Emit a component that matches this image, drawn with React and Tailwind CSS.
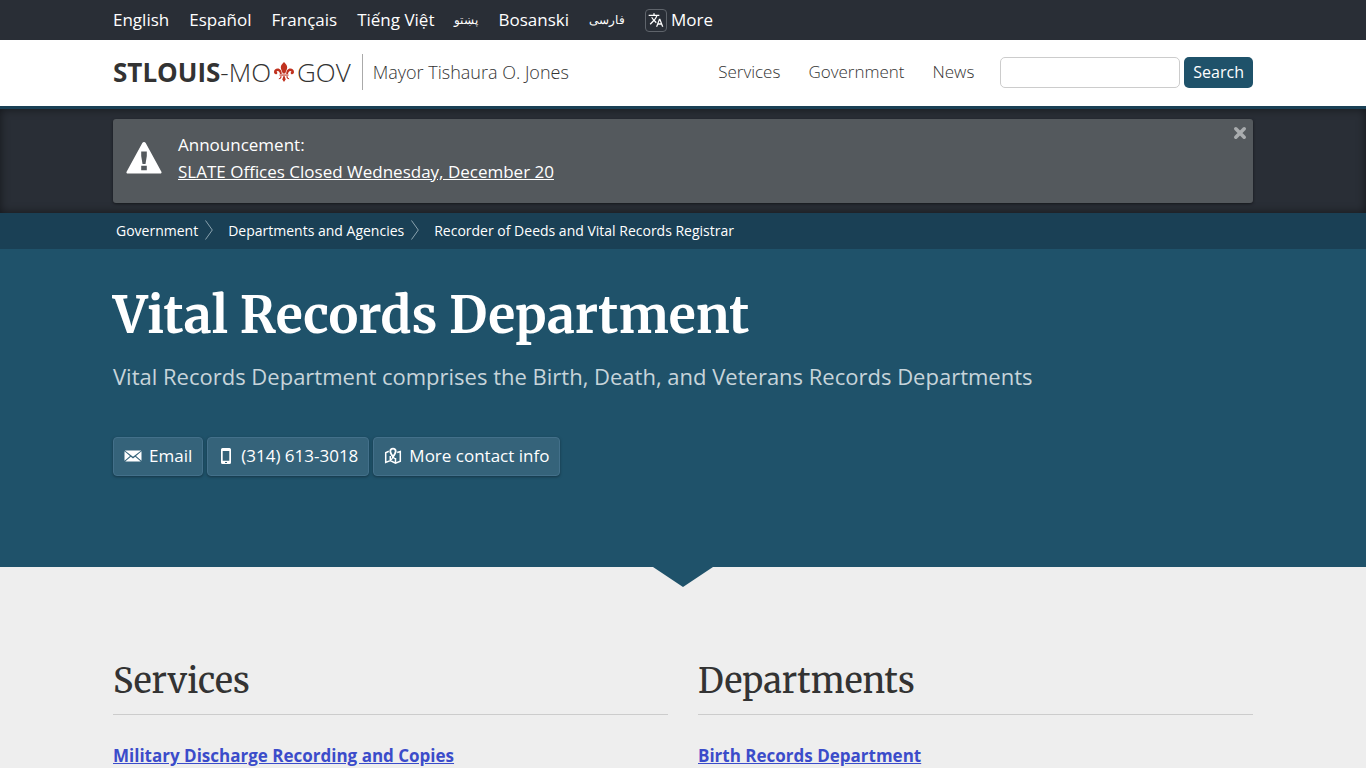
import { MdTranslate } from "react-icons/md";

const languages = [
  { name: "English" },
  { name: "Español" },
  { name: "Français" },
  { name: "Tiếng Việt" },
  { name: "پښتو", rtl: true },
  { name: "Bosanski" },
  { name: "فارسی", rtl: true },
];

const crumbs = [
  "Government",
  "Departments and Agencies",
  "Recorder of Deeds and Vital Records Registrar",
];

const sections = [
  { title: "Services", link: "Military Discharge Recording and Copies" },
  { title: "Departments", link: "Birth Records Department" },
];

function Container({ children, className = "" }) {
  return <div className={`mx-auto w-full max-w-[1140px] ${className}`}>{children}</div>;
}

function FleurDeLis() {
  return (
    <svg viewBox="0 0 20 20" className="mx-[3px] h-5 w-5 fill-[#c0321f]" aria-hidden="true">
      <path d="M10 0c2 2 3.200 3.600 3.200 5.400 0 2.200-1.600 3.900-1.900 6.100H8.700C8.400 9.300 6.800 7.600 6.800 5.400 6.800 3.600 8 2 10 0z" />
      <path d="M7.800 12C7.800 8.900 6.200 6.600 3.700 6.600 1.500 6.600 0 8.200 0 10c0 1.300.8 2.200 1.900 2.200.8 0 1.400-.5 1.400-1.300 0-.6-.3-1-.8-1.100.2-.6.7-.9 1.200-.9 1.300 0 2 1.300 2.300 3.100z" />
      <path d="M12.200 12c0-3.100 1.600-5.400 4.100-5.400C18.500 6.600 20 8.200 20 10c0 1.300-.8 2.200-1.900 2.200-.8 0-1.400-.5-1.400-1.300 0-.6.3-1 .8-1.100-.2-.6-.7-.9-1.200-.9-1.300 0-2 1.300-2.300 3.100z" />
      <path d="M5.500 12.500h9v1.100h-9z" />
      <path d="M9.100 14.300h1.800c0 1.300.4 2.200.9 3L10 20l-1.800-2.700c.5-.8.9-1.700.9-3zM7.700 14.300c-.2 1.900-1.400 3-3 2.900.1-.8.600-1.300 1.300-1.300.2-.6.300-1.100.3-1.600zM12.300 14.300c.2 1.900 1.400 3 3 2.900-.1-.8-.6-1.300-1.300-1.300-.2-.6-.3-1.100-.3-1.600z" />
    </svg>
  );
}

function WarningIcon() {
  return (
    <svg viewBox="0 0 36 32" className="mt-[23px] h-8 w-9 shrink-0 fill-white" aria-hidden="true">
      <path
        fillRule="evenodd"
        d="M18 0c.7 0 1.300.4 1.700 1.100l15.700 28.600c.5 1-.1 1.900-1.100 1.900H1.700c-1 0-1.600-.9-1.100-1.900L16.300 1.100C16.700.4 17.300 0 18 0zM15.200 9.500v4.500l1.300 8h3l1.300-8V9.500zM15.200 23.800v4.400h5.600v-4.400z"
      />
    </svg>
  );
}

function EnvelopeIcon() {
  return (
    <svg viewBox="0 0 18 12" className="h-3 w-[18px] fill-white" aria-hidden="true">
      <path d="M.8.5h16.400L9 6.800zM.5 1.200 6 6 .5 10.800zM17.500 1.200v9.600L12 6zM6.800 6.700 9 8.400l2.200-1.700 5.600 4.800H1.200z" />
    </svg>
  );
}

function PhoneIcon() {
  return (
    <svg viewBox="0 0 12 18" className="mx-0.5 h-[18px] w-3 fill-white" aria-hidden="true">
      <path fillRule="evenodd" d="M2.500 1h7A1.500 1.500 0 0 1 11 2.500v13A1.500 1.500 0 0 1 9.500 17h-7A1.500 1.500 0 0 1 1 15.500v-13A1.500 1.500 0 0 1 2.500 1zM2.700 4v9.800h6.600V4zM5 15v1h2v-1z" />
    </svg>
  );
}

function MapIcon() {
  return (
    <svg viewBox="0 0 18 18" className="h-[18px] w-[18px]" fill="none" stroke="white" aria-hidden="true">
      <path strokeWidth="1.500" d="M4.800 4.300 1.700 5.700v9.700l4.600-1.900 5.200 2.700 4.800-1.900V4.500l-3.100 1M6.300 13.500V9M11.500 16v-5" />
      <path strokeWidth="1.800" d="M9 9.800C7.400 7.600 6.300 6 6.300 4.300a2.700 2.700 0 0 1 5.400 0C11.700 6 10.600 7.600 9 9.800z" />
      <path strokeWidth="1.300" d="M9 10l-1.800 2.800M9 10l1.800 1.800" />
    </svg>
  );
}

function CloseIcon() {
  return (
    <svg viewBox="0 0 14 14" className="h-3.5 w-3.5" stroke="#a9acae" strokeWidth="3.600" strokeLinecap="round" aria-hidden="true">
      <path d="M2.800 2.800l8.400 8.400M11.200 2.800l-8.400 8.400" />
    </svg>
  );
}

function ContactButton({ icon, children }) {
  return (
    <a
      href="#"
      className="flex h-[39px] items-center gap-[7px] rounded border border-[#43708a] bg-[#35637a] px-2.5 pb-0.5 text-white shadow-[0_1px_3px_rgba(0,0,0,0.35)]"
    >
      {icon}
      {children}
    </a>
  );
}

export default function App() {
  return (
    <div className="min-h-screen overflow-x-hidden bg-[#eeeeee] font-['Open_Sans',sans-serif] text-[17px] text-[#333333]">
      <nav className="bg-[#292e36] text-white" aria-label="Languages">
        <Container className="flex h-10 items-center gap-5">
          {languages.map(({ name, rtl }) => (
            <a key={name} href="#" className={rtl ? "text-[12px]" : ""}>{name}</a>
          ))}
          <a href="#" className="flex items-center gap-1">
            <span className="flex h-[23px] w-[22px] items-center justify-center rounded-sm border border-[#5f646b]">
              <MdTranslate className="h-4 w-4" />
            </span>
            More
          </a>
        </Container>
      </nav>

      <header className="border-b-[3px] border-[#1a4055] bg-white">
        <Container className="flex h-[66px] items-center pb-0.5">
          <a href="#" className="flex items-center text-[26px] leading-9">
            <span className="font-bold">STLOUIS</span>
            <span className="font-light">-MO</span>
            <FleurDeLis />
            <span className="font-light">GOV</span>
          </a>
          <a href="#" className="ml-[11px] border-l border-[#aaaaaa] py-1 pl-2.5 text-[18px] leading-7 font-light">
            Mayor Tishaura O. Jones
          </a>
          <nav className="ml-auto flex gap-7 font-light" aria-label="Main">
            <a href="#">Services</a>
            <a href="#">Government</a>
            <a href="#">News</a>
          </nav>
          <form className="ml-[26px] flex gap-1" onSubmit={(e) => e.preventDefault()}>
            <input
              type="search"
              aria-label="Search the site"
              className="h-[31px] w-[180px] rounded-[5px] border border-[#cccccc] bg-white px-2 outline-none"
            />
            <button type="submit" className="h-[31px] rounded-[5px] bg-[#1f526a] px-[9px] text-base text-white">
              Search
            </button>
          </form>
        </Container>
      </header>

      <section className="bg-[#292e36] pt-2.5 pb-2.5 shadow-[inset_0_0_10px_rgba(0,0,0,0.5)]">
        <Container className="flex h-[84px] items-start rounded-[3px] bg-[#54595d] pl-[13px] shadow-[0_1px_3px_rgba(0,0,0,0.5)]">
          <WarningIcon />
          <p className="ml-4 pt-3 leading-[27px] text-white">
            Announcement:
            <br />
            <a href="#" className="underline">SLATE Offices Closed Wednesday, December 20</a>
          </p>
          <button type="button" aria-label="Dismiss announcement" className="mt-[7px] mr-1.5 ml-auto">
            <CloseIcon />
          </button>
        </Container>
      </section>

      <nav className="bg-[#1a4055]" aria-label="Breadcrumb">
        <Container className="flex h-9 items-center pb-0.5 pl-[3px] text-[14px] text-white">
          {crumbs.map((name, i) => (
            <span key={name} className="flex items-center">
              {i > 0 && (
                <svg viewBox="0 0 8 20" className="mr-[15px] ml-[7px] h-5 w-2" fill="none" stroke="#8ba3af" aria-hidden="true">
                  <path d="M.5.500 7.300 10 .5 19.500" />
                </svg>
              )}
              <a href="#">{name}</a>
            </span>
          ))}
        </Container>
      </nav>

      <section className="bg-[#1f526a] pt-[33px] pb-[91px]">
        <Container>
          <h1 className="font-['Merriweather','Liberation_Serif',serif] text-[50px] leading-[68px] font-bold text-white">
            Vital Records Department
          </h1>
          <p className="mt-2.5 text-[22px] leading-8 text-[#c7d4da]">
            Vital Records Department comprises the Birth, Death, and Veterans Records Departments
          </p>
          <div className="mt-[45px] flex gap-1">
            <ContactButton icon={<EnvelopeIcon />}>Email</ContactButton>
            <ContactButton icon={<PhoneIcon />}>(314) 613-3018</ContactButton>
            <ContactButton icon={<MapIcon />}>More contact info</ContactButton>
          </div>
        </Container>
      </section>

      <svg viewBox="0 0 60 20" className="mx-auto h-5 w-[60px] fill-[#1f526a]" aria-hidden="true">
        <path d="M0 0h60L30 20z" />
      </svg>

      <main>
        <Container className="grid grid-cols-2 gap-[30px] pt-[68px] pb-10">
          {sections.map(({ title, link }) => (
            <section key={title}>
              <h2 className="border-b border-[#cccccc] pb-[7px] font-['Merriweather','Liberation_Serif',serif] text-[34px] leading-[52px] font-medium">
                {title}
              </h2>
              <a href="#" className="mt-[29px] block leading-6 font-bold text-[#3b4cca] underline">
                {link}
              </a>
            </section>
          ))}
        </Container>
      </main>
    </div>
  );
}
